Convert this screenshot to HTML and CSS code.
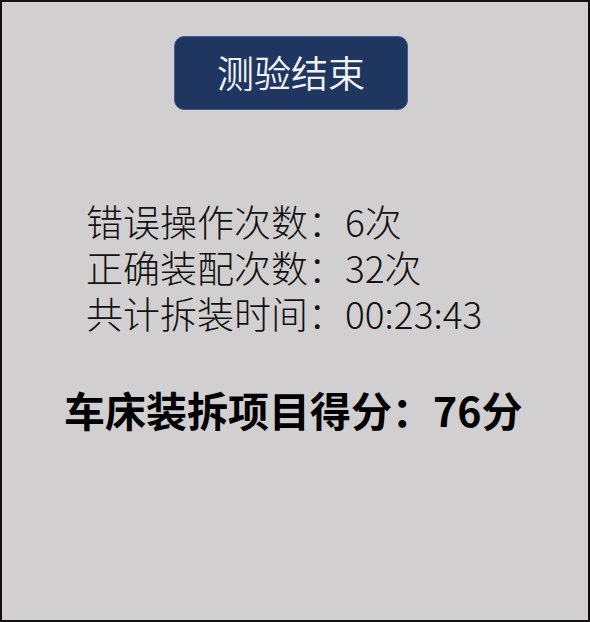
FILE: index.html
```html
<!DOCTYPE html>
<html lang="zh-CN">
<head>
<meta charset="utf-8">
<title>测验结束</title>
<link rel="stylesheet" href="styles.css">
</head>
<body>
<div class="panel">
  <div class="head">
    <div class="btn">测验结束</div>
  </div>
  <div class="stats">
    <div class="row">错误操作次数：6次</div>
    <div class="row">正确装配次数：32次</div>
    <div class="row">共计拆装时间：00:23:43</div>
  </div>
  <div class="score">车床装拆项目得分：76分</div>
</div>
</body>
</html>
```
FILE: styles.css
```css
html, body {
  margin: 0;
  padding: 0;
}
body {
  width: 590px;
  height: 622px;
  font-family: "Noto Sans CJK SC", "Liberation Sans", sans-serif;
}
.panel {
  box-sizing: border-box;
  width: 590px;
  height: 622px;
  border: 2px solid #111;
  background: #d1cfd0;
  display: flex;
  flex-direction: column;
}
.head {
  display: flex;
  justify-content: center;
  padding-top: 34px;
  padding-right: 8px;
}
.btn {
  box-sizing: border-box;
  width: 234px;
  height: 74px;
  background: #1f3661;
  border: 1px solid #3d5e95;
  border-radius: 10px;
  color: #f2f2f2;
  font-size: 37px;
  font-weight: 350;
  line-height: 46px;
  display: flex;
  align-items: center;
  justify-content: center;
  padding-bottom: 2px;
}
.stats {
  margin-top: 88px;
  padding-left: 84px;
  color: #111;
  font-size: 37px;
  line-height: 46px;
  font-weight: 300;
}
.score {
  margin-top: 48px;
  padding-left: 62px;
  color: #000;
  font-size: 41px;
  font-weight: 700;
  line-height: 50px;
}
```
